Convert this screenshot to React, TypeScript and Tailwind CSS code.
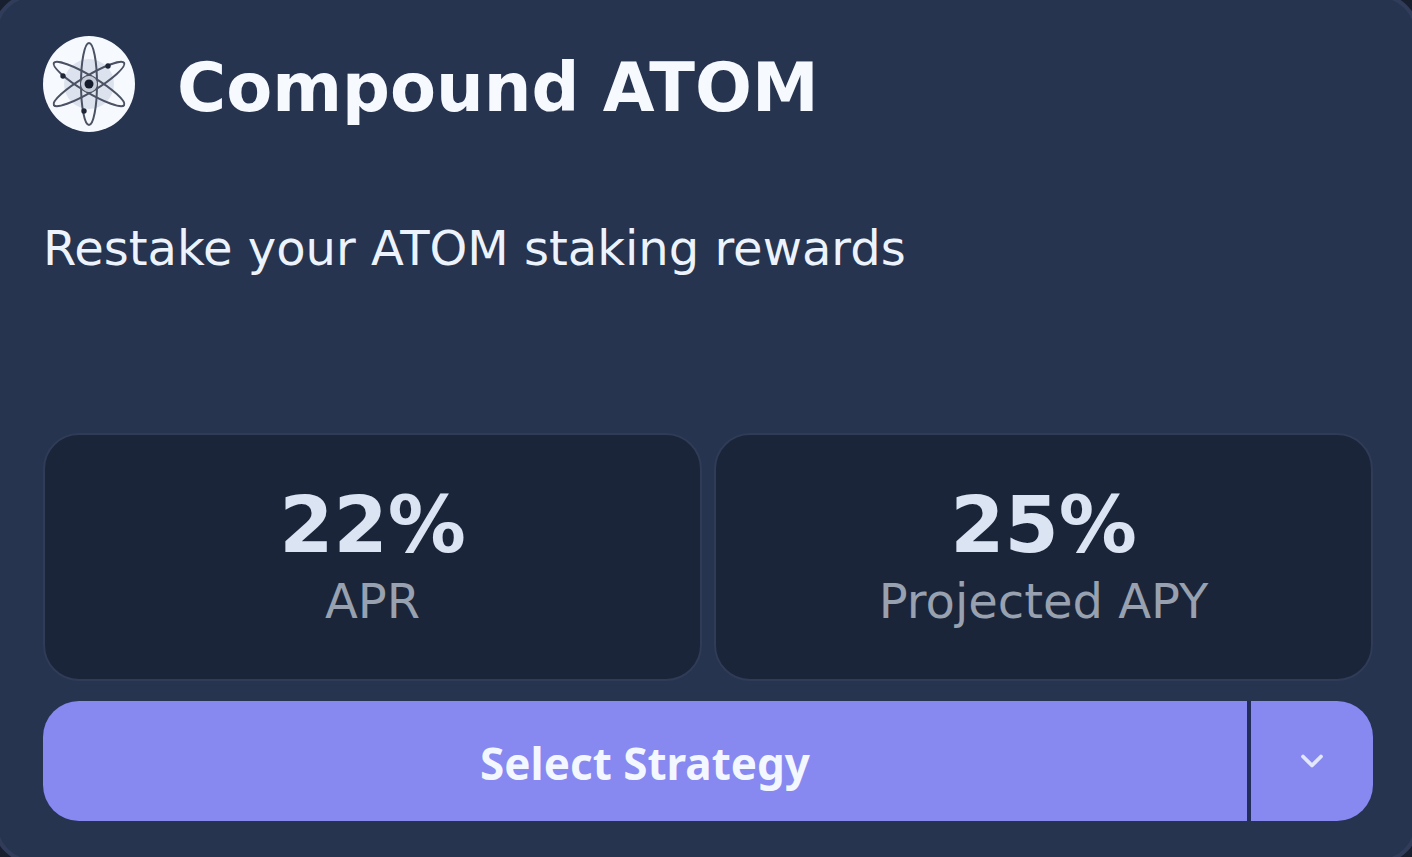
import React from 'react';
import { ChevronDown } from 'lucide-react';

interface StatProps {
  value: string;
  label: string;
}

const stats: StatProps[] = [
  { value: '22%', label: 'APR' },
  { value: '25%', label: 'Projected APY' },
];

const AtomLogo: React.FC = () => (
  <svg viewBox="0 0 92 96" className="w-[92px] h-24 shrink-0" fill="none" aria-hidden="true">
    <ellipse cx="46" cy="48" rx="46" ry="48" fill="#f6faff" />
    <circle cx="46" cy="48" r="25" fill="#dde3ee" />
    <g stroke="#4b5263" strokeWidth="2">
      <ellipse cx="46" cy="48" rx="8" ry="41" />
      <ellipse cx="46" cy="48" rx="8" ry="41" transform="rotate(59 46 48)" />
      <ellipse cx="46" cy="48" rx="8" ry="41" transform="rotate(-59 46 48)" />
    </g>
    <circle cx="46" cy="48" r="8" fill="#c6ccd8" />
    <circle cx="46" cy="48" r="4.5" fill="#141c2e" />
    <g fill="#1e2638">
      <circle cx="65" cy="30" r="2.7" />
      <circle cx="20" cy="40" r="2.7" />
      <circle cx="41" cy="75" r="2.7" />
    </g>
  </svg>
);

const Stat: React.FC<StatProps> = ({ value, label }) => (
  <div className="flex flex-col items-center justify-center rounded-[36px] border-2 border-[#2f3b57] bg-[#1b2539] py-12">
    <dd className="text-[78px] leading-[84px] font-bold text-[#dbe4f3]">{value}</dd>
    <dt className="order-last pt-1 text-5xl leading-[60px] text-[#98a1b0]">{label}</dt>
  </div>
);

export default function App() {
  return (
    <main className="flex min-h-screen overflow-hidden bg-[#18202f] font-['DejaVu_Sans',Verdana,sans-serif]">
      <article className="-m-1.5 flex-1 rounded-[38px] border-4 border-[#303c5a] bg-[#26344f] pt-[38px] pr-[41px] pb-9 pl-[45px]">
        <header className="flex items-center gap-[42px]">
          <AtomLogo />
          <h1 className="pt-2 text-[67px] leading-[88px] font-bold whitespace-nowrap text-[#f6faff]">Compound ATOM</h1>
        </header>

        <p className="mt-[84px] h-[217px] text-5xl leading-[64px] text-[#edf3fd]">Restake your ATOM staking rewards</p>

        <dl className="grid grid-cols-2 gap-3">
          {stats.map((stat) => (
            <Stat key={stat.label} value={stat.value} label={stat.label} />
          ))}
        </dl>

        <div className="mt-5 flex h-[120px] gap-1 overflow-hidden rounded-[36px] bg-[#232d5c] text-[#f3f7ff]">
          <button type="button" className="flex-1 bg-[#8788f0] pt-1 font-['Noto_Sans','Open_Sans',sans-serif] text-[44px] font-bold">
            Select Strategy
          </button>
          <button type="button" aria-label="More options" className="flex w-[122px] items-center justify-center bg-[#8788f0]">
            <ChevronDown className="size-9 text-[#e2e7fb]" strokeWidth={2.5} />
          </button>
        </div>
      </article>
    </main>
  );
}
